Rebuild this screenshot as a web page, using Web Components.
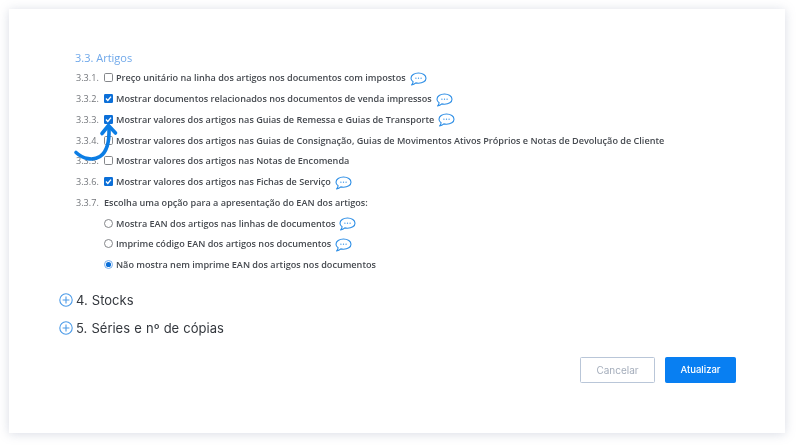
<!DOCTYPE html>
<html lang="pt">
<head>
<meta charset="utf-8">
<title>Artigos</title>
<style>
  html, body { margin: 0; height: 100%; background: #fff; }
  body { width: 800px; height: 448px; overflow: hidden; }
</style>
</head>
<body>
<settings-card>
  <span slot="title">3.3. Artigos</span>
  <option-row num="3.3.1." type="check" note>Preço unitário na linha dos artigos nos documentos com impostos</option-row>
  <option-row num="3.3.2." type="check" checked note>Mostrar documentos relacionados nos documentos de venda impressos</option-row>
  <option-row num="3.3.3." type="check" checked note>Mostrar valores dos artigos nas Guias de Remessa e Guias de Transporte</option-row>
  <option-row num="3.3.4." type="check">Mostrar valores dos artigos nas Guias de Consignação, Guias de Movimentos Ativos Próprios e Notas de Devolução de Cliente</option-row>
  <option-row num="3.3.5." type="check">Mostrar valores dos artigos nas Notas de Encomenda</option-row>
  <option-row num="3.3.6." type="check" checked note>Mostrar valores dos artigos nas Fichas de Serviço</option-row>
  <option-row num="3.3.7." type="none">Escolha uma opção para a apresentação do EAN dos artigos:</option-row>
  <option-row type="radio" note>Mostra EAN dos artigos nas linhas de documentos</option-row>
  <option-row type="radio" note>Imprime código EAN dos artigos nos documentos</option-row>
  <option-row type="radio" checked>Não mostra nem imprime EAN dos artigos nos documentos</option-row>
  <collapse-section slot="sections">4. Stocks</collapse-section>
  <collapse-section slot="sections">5. Séries e nº de cópias</collapse-section>
  <action-button slot="actions" kind="ghost">Cancelar</action-button>
  <action-button slot="actions" kind="primary">Atualizar</action-button>
</settings-card>

<script>
class SettingsCard extends HTMLElement {
    constructor() {
        super();
        this.attachShadow({mode: 'open'});
    }

    connectedCallback() {
        this.shadowRoot.innerHTML = `
            <style>
        :host {
            display: block;
            position: absolute;
            left: 9px;
            top: 9px;
            width: 776px;
            height: 424px;
            box-sizing: border-box;
            padding: 41px 49px 0 50px;
            background: #fff;
            box-shadow: 0 1px 10px rgba(120, 130, 160, 0.28);
            filter: blur(0.3px);
        }
        .title {
            font: 400 11px/16px "Open Sans", sans-serif;
            color: #6fa8ea;
            margin: 0 0 2px 16px;
        }
        .rows {
            display: flex;
            flex-direction: column;
        }
        .sections {
            display: flex;
            flex-direction: column;
            gap: 10px;
            margin-top: 15px;
        }
        .actions {
            display: flex;
            justify-content: flex-end;
            gap: 10px;
            margin-top: 20px;
        }
        .arrow {
            position: absolute;
            left: 60px;
            top: 109px;
        }
            </style>
            <div class="title"><slot name="title"></slot></div>
            <div class="rows"><slot></slot></div>
            <div class="sections"><slot name="sections"></slot></div>
            <div class="actions"><slot name="actions"></slot></div>
            <svg class="arrow" width="50" height="50" viewBox="0 0 50 50" fill="none" stroke="#0b7de4" stroke-linecap="round" stroke-linejoin="round">
                <path d="M7 34.5C14 41 24 43 31 38.5C38 34 40.5 25 40 10" stroke-width="3.6"/>
                <path d="M33 15.5L39.5 7.5L46.5 15" stroke-width="3.6"/>
            </svg>
        `;
    }
}

class OptionRow extends HTMLElement {
    constructor() {
        super();
        this.attachShadow({mode: 'open'});
    }

    connectedCallback() {
        const type = this.getAttribute('type');
        const num = this.getAttribute('num') || '';
        const on = this.hasAttribute('checked');
        let control = '';
        if (type === 'check') {
            control = on
                ? `<svg class="ctl" width="9" height="9" viewBox="0 0 9 9"><rect width="9" height="9" rx="1.2" fill="#0b6fd8"/><path d="M2 4.6L3.8 6.4L7 2.6" fill="none" stroke="#fff" stroke-width="1.4"/></svg>`
                : `<svg class="ctl" width="9" height="9" viewBox="0 0 9 9"><rect x=".5" y=".5" width="8" height="8" rx="1.2" fill="#fff" stroke="#85878b"/></svg>`;
        } else if (type === 'radio') {
            control = `<svg class="ctl" width="9" height="9" viewBox="0 0 9 9"><circle cx="4.5" cy="4.5" r="4" fill="#fff" stroke="${on ? '#6aa5e8' : '#77797d'}" stroke-width=".9"/>${on ? '<circle cx="4.5" cy="4.5" r="2.6" fill="#0b6fd8"/>' : ''}</svg>`;
        }
        const note = this.hasAttribute('note') ? '<note-icon></note-icon>' : '';
        this.shadowRoot.innerHTML = `
            <style>
        :host {
            display: flex;
            align-items: center;
            height: 20.75px;
            font: 600 9.1px/14px "Open Sans", sans-serif;
            color: #45494f;
            white-space: nowrap;
        }
        .num {
            width: 28px;
            margin-left: 17px;
            flex: none;
            color: #73767b;
            font-weight: 400;
        }
        .ctl {
            flex: none;
            margin: -1px 3px 0 0;
        }
        note-icon { margin: 1px 0 0 4px; }
            </style>
            <span class="num">${num}</span>
            ${control}
            <span><slot></slot></span>
            ${note}
        `;
    }
}

class NoteIcon extends HTMLElement {
    constructor() {
        super();
        this.attachShadow({mode: 'open'});
    }

    connectedCallback() {
        this.shadowRoot.innerHTML = `
            <style>
        :host { display: inline-flex; flex: none; }
            </style>
            <svg width="17" height="14" viewBox="0 0 17 14" fill="none">
                <path d="M8.5 1C12.7 1 16 3.1 16 6.2C16 9.2 12.7 11.2 8.5 11.2C7.5 11.2 6.6 11.1 5.8 10.9C4.7 12 3.2 12.8 1.6 12.9C2.5 12 3 11 3.1 9.7C1.8 8.8 1 7.6 1 6.2C1 3.1 4.3 1 8.5 1Z" stroke="#2f8fe6" stroke-width="1.1" stroke-linejoin="round"/>
                <circle cx="5.9" cy="6.2" r=".65" fill="#2f8fe6"/>
                <circle cx="8.5" cy="6.2" r=".65" fill="#2f8fe6"/>
                <circle cx="11.1" cy="6.2" r=".65" fill="#2f8fe6"/>
            </svg>
        `;
    }
}

class CollapseSection extends HTMLElement {
    constructor() {
        super();
        this.attachShadow({mode: 'open'});
    }

    connectedCallback() {
        this.shadowRoot.innerHTML = `
            <style>
        :host {
            display: flex;
            align-items: center;
            gap: 3px;
            height: 18px;
            font: 400 13px/18px Inter, sans-serif;
            word-spacing: 0.5px;
            color: #33373d;
        }
            </style>
            <svg width="14" height="14" viewBox="0 0 14 14" fill="none" stroke="#4c9be8" stroke-width="1.1">
                <circle cx="7" cy="7" r="6.2"/>
                <path d="M3.6 7H10.4M7 3.6V10.4"/>
            </svg>
            <span><slot></slot></span>
        `;
    }
}

class ActionButton extends HTMLElement {
    constructor() {
        super();
        this.attachShadow({mode: 'open'});
    }

    connectedCallback() {
        const primary = this.getAttribute('kind') === 'primary';
        this.shadowRoot.innerHTML = `
            <style>
        :host {
            display: flex;
            align-items: center;
            justify-content: center;
            box-sizing: border-box;
            height: 26px;
            width: ${primary ? 71 : 75}px;
            border-radius: 1.5px;
            font: ${primary ? 500 : 400} ${primary ? 9.5 : 10}px/12px Inter, sans-serif;
            color: ${primary ? '#fff' : '#a4adbb'};
            background: ${primary ? '#087ff2' : '#fff'};
            border: 1px solid ${primary ? '#087ff2' : '#b9c6d8'};
        }
            </style>
            <slot></slot>
        `;
    }
}

customElements.define('settings-card', SettingsCard);
customElements.define('option-row', OptionRow);
customElements.define('note-icon', NoteIcon);
customElements.define('collapse-section', CollapseSection);
customElements.define('action-button', ActionButton);
</script>
</body>
</html>
